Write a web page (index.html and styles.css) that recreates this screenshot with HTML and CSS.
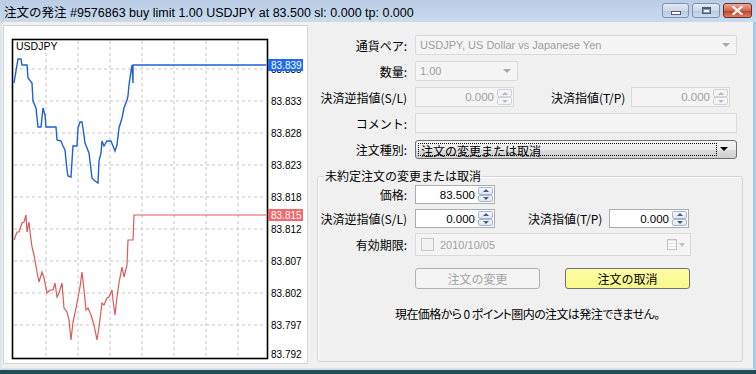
FILE: index.html
```html
<!DOCTYPE html>
<html lang="ja">
<head>
    <meta charset="UTF-8">
    <title>注文の発注</title>
    <link rel="stylesheet" href="styles.css">
</head>
<body>
    <div class="window">
        <!-- Title bar -->
        <div class="titlebar">
            <span class="title">注文の発注 #9576863 buy limit 1.00 USDJPY at 83.500 sl: 0.000 tp: 0.000</span>
            <div class="caption-buttons">
                <span class="cap-btn min"><i></i></span>
                <span class="cap-btn max"><i></i></span>
                <span class="cap-btn close">
                    <svg width="11" height="9" viewBox="0 0 11 9"><path d="M1.5 1 L9.5 8 M9.5 1 L1.5 8" stroke="#fff" stroke-width="2.2" stroke-linecap="square"/></svg>
                </span>
            </div>
        </div>

        <div class="client">
            <!-- Tick chart -->
            <div class="chart-panel">
                <svg width="303" height="337" viewBox="4 26 303 337">
                    <path class="grid" d="M14 69H266 M14 101H266 M14 133H266 M14 165H266 M14 197H266 M14 229H266 M14 261H266 M14 293H266 M14 325H266
                        M46 41V357 M78 41V357 M110 41V357 M142 41V357 M174 41V357 M206 41V357 M238 41V357"/>
                    <rect x="12.5" y="39.5" width="255" height="319" fill="none" stroke="#000" stroke-width="1.6"/>
                    <text class="sym" x="16" y="50">USDJPY</text>

                    <polyline class="ask" points="14,83 18,59 21,59 22,65 27,65 28,78 32,83 33,101 36,108 38,127 41,127 43,108 45,115 46,127 56,127 57,140 61,141 63,146 65,150 67,170 68,176 71,177 72,161 73,146 77,146 78,128 80,122 82,122 83,128 85,143 87,148 89,153 92,178 95,181 98,183 99,161 101,153 102,141 104,146 107,141 111,141 113,146 115,151 117,145 119,128 122,118 124,108 127,100 128,96 129,85 131,71 132,65 133,83 133,65 266,65"/>
                    <polyline class="bid" points="14,240 17,232 19,232 22,223 24,222 26,215 27,232 29,222 30,232 32,247 34,255 37,272 39,282 42,272 44,278 47,293 50,290 53,290 55,283 57,297 59,293 62,283 64,308 67,312 69,320 71,340 73,322 75,313 77,303 80,287 82,272 84,290 86,310 88,308 91,315 94,325 97,340 99,327 102,303 104,305 107,298 109,297 112,290 113,300 115,315 117,297 119,283 122,267 124,277 127,265 128,240 133,240 134,215 266,215"/>

                    <g class="scale">
                        <text x="271" y="72.5">83.838</text>
                        <text x="271" y="104.5">83.833</text>
                        <text x="271" y="136.5">83.828</text>
                        <text x="271" y="168.5">83.823</text>
                        <text x="271" y="200.5">83.818</text>
                        <text x="271" y="232.5">83.812</text>
                        <text x="271" y="264.5">83.807</text>
                        <text x="271" y="296.5">83.802</text>
                        <text x="271" y="328.5">83.797</text>
                        <text x="271" y="357.5">83.792</text>
                    </g>
                    <rect x="268" y="59" width="35" height="12" fill="#1d6cf0"/>
                    <text class="tag" x="271" y="68.5">83.839</text>
                    <rect x="268" y="209" width="35" height="12" fill="#f06a6a"/>
                    <text class="tag" x="271" y="218.5">83.815</text>
                </svg>
            </div>

            <!-- Order form -->
            <div class="order-form">
                <div class="row">
                    <span class="lbl">通貨ペア:</span>
                    <div class="combo off full"><span class="latin">USDJPY, US Dollar vs Japanese Yen</span><span class="arrow"></span></div>
                </div>
                <div class="row">
                    <span class="lbl">数量:</span>
                    <div class="combo off small"><span class="latin">1.00</span><span class="arrow"></span></div>
                </div>
                <div class="row">
                    <span class="lbl">決済逆指値(S/L)</span>
                    <div class="spin off wide"><span class="val">0.000</span><span class="arrows"><span class="up"></span><span class="down"></span></span></div>
                    <span class="lbl2">決済指値(T/P)</span>
                    <div class="spin off wide"><span class="val">0.000</span><span class="arrows"><span class="up"></span><span class="down"></span></span></div>
                </div>
                <div class="row">
                    <span class="lbl">コメント:</span>
                    <div class="field off full"></div>
                </div>
                <div class="row">
                    <span class="lbl">注文種別:</span>
                    <div class="combo on full"><span class="focus">注文の変更または取消</span><span class="arrow"></span></div>
                </div>

                <fieldset class="group">
                    <legend>未約定注文の変更または取消</legend>
                    <div class="grow">
                        <span class="lbl">価格:</span>
                        <div class="spin narrow"><span class="val">83.500</span><span class="arrows"><span class="up"></span><span class="down"></span></span></div>
                    </div>
                    <div class="grow">
                        <span class="lbl">決済逆指値(S/L)</span>
                        <div class="spin narrow"><span class="val">0.000</span><span class="arrows"><span class="up"></span><span class="down"></span></span></div>
                        <span class="lbl2">決済指値(T/P)</span>
                        <div class="spin narrow"><span class="val">0.000</span><span class="arrows"><span class="up"></span><span class="down"></span></span></div>
                    </div>
                    <div class="grow date-row">
                        <span class="lbl">有効期限:</span>
                        <div class="date">
                            <span class="check"></span>
                            <span class="latin">2010/10/05</span>
                            <span class="cal"></span>
                            <span class="arrow"></span>
                        </div>
                    </div>
                    <div class="grow btn-row">
                        <span class="btn disabled">注文の変更</span>
                        <span class="btn cancel">注文の取消</span>
                    </div>
                    <p class="note">現在価格から 0 ポイント圏内の注文は発注できません。</p>
                </fieldset>
            </div>
        </div>
    </div>
</body>
</html>
```

FILE: styles.css
```css
* {
    box-sizing: border-box;
}
html, body {
    margin: 0;
    padding: 0;
}
body {
    width: 756px;
    height: 374px;
    background: #1f4e57;
    font-family: "Noto Sans CJK JP", sans-serif;
    font-size: 12px;
    color: #000;
}
.window {
    width: 756px;
    height: 370px;
    display: flex;
    flex-direction: column;
    background: #f0f0f0;
}
.titlebar {
    height: 22px;
    display: flex;
    align-items: center;
    padding-left: 4px;
    background: linear-gradient(#b9cde6, #c9daee);
}
.title {
    font-family: "Liberation Sans", "Noto Sans CJK JP", sans-serif;
    font-size: 12.5px;
    white-space: nowrap;
}
.caption-buttons {
    margin-left: auto;
    margin-right: 4px;
    align-self: flex-start;
    margin-top: 3px;
    display: flex;
    gap: 3px;
}
.cap-btn {
    height: 15px;
    display: flex;
    align-items: center;
    justify-content: center;
    border: 1px solid #7d90ac;
    border-radius: 3px;
    background: linear-gradient(#e3ebf5, #cad8ea 50%, #b6c9e1 51%, #cddbed);
}
.cap-btn.min {
    width: 27px;
}
.cap-btn.min i {
    width: 10px;
    height: 4px;
    margin-top: 5px;
    background: #fff;
    border: 1px solid #4b5d78;
}
.cap-btn.max {
    width: 28px;
}
.cap-btn.max i {
    width: 9px;
    height: 7px;
    border: 1px solid #4b5d78;
    border-top-width: 2px;
    background: #fff;
    box-shadow: inset 0 0 0 1px #8a9ab0;
}
.cap-btn.close {
    width: 29px;
    border-color: #6b2b20;
    background: linear-gradient(#eba999, #d6654d 50%, #c2391f 51%, #d8836a);
}
.client {
    flex: 1;
    display: flex;
    border-left: 2px solid #dfe6ee;
    border-right: 3px solid #a6c8ee;
    border-bottom: 2px solid #d6dee8;
}
.chart-panel {
    width: 305px;
    height: 339px;
    margin: 3px 0 0 1px;
    border: 1px solid #d4d4d4;
    background: #fff;
}
.chart-panel svg {
    display: block;
}
.grid {
    fill: none;
    stroke: #c6c6c6;
    stroke-width: 1;
    stroke-dasharray: 3 3;
}
.ask {
    fill: none;
    stroke: #1f5fdc;
    stroke-width: 1.4;
}
.bid {
    fill: none;
    stroke: #e05858;
    stroke-width: 1.2;
}
.sym, .scale text, .tag {
    font-family: "Liberation Sans", sans-serif;
    font-size: 10px;
}
.sym {
    font-size: 10.5px;
}
.tag {
    fill: #fff;
}

/* form */
.order-form {
    margin-left: 2px;
    padding-top: 13px;
    display: flex;
    flex-direction: column;
    gap: 6px;
}
.row, .grow {
    display: flex;
    align-items: center;
    height: 20px;
}
.lbl {
    width: 97px;
    margin-right: 8px;
    flex-shrink: 0;
    text-align: right;
    white-space: nowrap;
}
.lbl2 {
    width: 80px;
    margin-left: 37px;
    white-space: nowrap;
}
.latin {
    font-family: "Liberation Sans", sans-serif;
    font-size: 11px;
}
.combo, .field, .spin, .date {
    height: 100%;
    display: flex;
    align-items: center;
    border: 1px solid #abadb3;
    background: #fff;
}
.full {
    width: 322px;
}
.small {
    width: 103px;
}
.off {
    background: #f4f4f4;
    border-color: #d9d9d9;
    color: #9e9e9e;
}
.combo {
    padding-left: 4px;
    border-radius: 2px;
}
.arrow {
    margin-left: auto;
    margin-right: 6px;
    border-left: 4px solid transparent;
    border-right: 4px solid transparent;
    border-top: 4px solid #a8a8a8;
}
.combo.on {
    padding: 2px;
    height: 19px;
    border-color: #707070;
    border-radius: 3px;
    background: linear-gradient(#f3f3f3, #ebebeb 50%, #dddddd 51%, #cfcfcf);
}
.combo.on .focus {
    width: 299px;
    height: 100%;
    padding-left: 2px;
    line-height: 13px;
    border: 1px dotted #000;
}
.combo.on .arrow {
    border-top-color: #000;
    margin-right: 6px;
}
.spin.wide {
    width: 99px;
}
.spin.narrow {
    width: 80px;
}
.spin .val {
    flex: 1;
    text-align: right;
    padding-right: 3px;
    font-family: "Liberation Sans", sans-serif;
    font-size: 11.5px;
}
.spin .arrows {
    width: 16px;
    height: 100%;
    padding: 1px 1px 1px 0;
    display: flex;
    flex-direction: column;
}
.arrows span {
    flex: 1;
    display: flex;
    align-items: center;
    justify-content: center;
    border: 1px solid #a9b6c8;
    border-radius: 2px;
    background: linear-gradient(#f7f9fc, #dde5ef);
}
.arrows span::after {
    content: "";
    border-left: 3px solid transparent;
    border-right: 3px solid transparent;
}
.arrows .up::after {
    border-bottom: 3px solid #4a5a78;
}
.arrows .down::after {
    border-top: 3px solid #4a5a78;
}
.spin.off .arrows span {
    border-color: #cfd4da;
    background: #f2f4f6;
}
.spin.off .arrows .up::after {
    border-bottom-color: #b4bcc8;
}
.spin.off .arrows .down::after {
    border-top-color: #b4bcc8;
}

/* group box */
.group {
    width: 426px;
    margin: 3px 0 0 7px;
    padding: 1px 0 39px 0;
    border: 1px solid #d5d5d5;
    border-radius: 3px;
    box-shadow: inset 1px 1px #fff;
}
.group legend {
    margin-left: 6px;
    padding: 0 1px;
    line-height: 16px;
}
.group .lbl {
    width: 89px;
}
.group .lbl2 {
    width: 81px;
    margin-left: 33px;
}
.grow {
    height: 19px;
    margin-top: 5px;
}
.grow:first-of-type {
    margin-top: 0;
}
.grow.date-row {
    height: 23px;
}
.date {
    width: 276px;
    background: #f4f4f4;
    border-color: #d9d9d9;
    color: #a2a2a2;
}
.check {
    width: 13px;
    height: 13px;
    margin: 0 6px 0 5px;
    border: 1px solid #c6c6c6;
    background: #f2f2f2;
}
.cal {
    width: 10px;
    height: 11px;
    margin-left: auto;
    border: 1px solid #c2c2c2;
    background: repeating-linear-gradient(#e6e6e6 0 1px, #fafafa 1px 3px);
}
.date .arrow {
    margin-left: 2px;
    margin-right: 5px;
    border-left-width: 3px;
    border-right-width: 3px;
    border-top-color: #c0c0c0;
}
.grow.btn-row {
    height: 21px;
    margin-top: 12px;
    padding-left: 97px;
}
.btn {
    width: 125px;
    height: 100%;
    display: flex;
    align-items: center;
    justify-content: center;
    border: 1px solid #707070;
    border-radius: 3px;
}
.btn.disabled {
    color: #a3a3a3;
    border-color: #adb2b5;
    background: #f4f4f4;
}
.btn.cancel {
    margin-left: 25px;
    background: linear-gradient(#fdfda4, #f8f88c);
}
.note {
    margin: 17px 0 0 0;
    padding-left: 77px;
    line-height: 16px;
    font-feature-settings: "palt";
    letter-spacing: -0.6px;
    white-space: nowrap;
}
```
